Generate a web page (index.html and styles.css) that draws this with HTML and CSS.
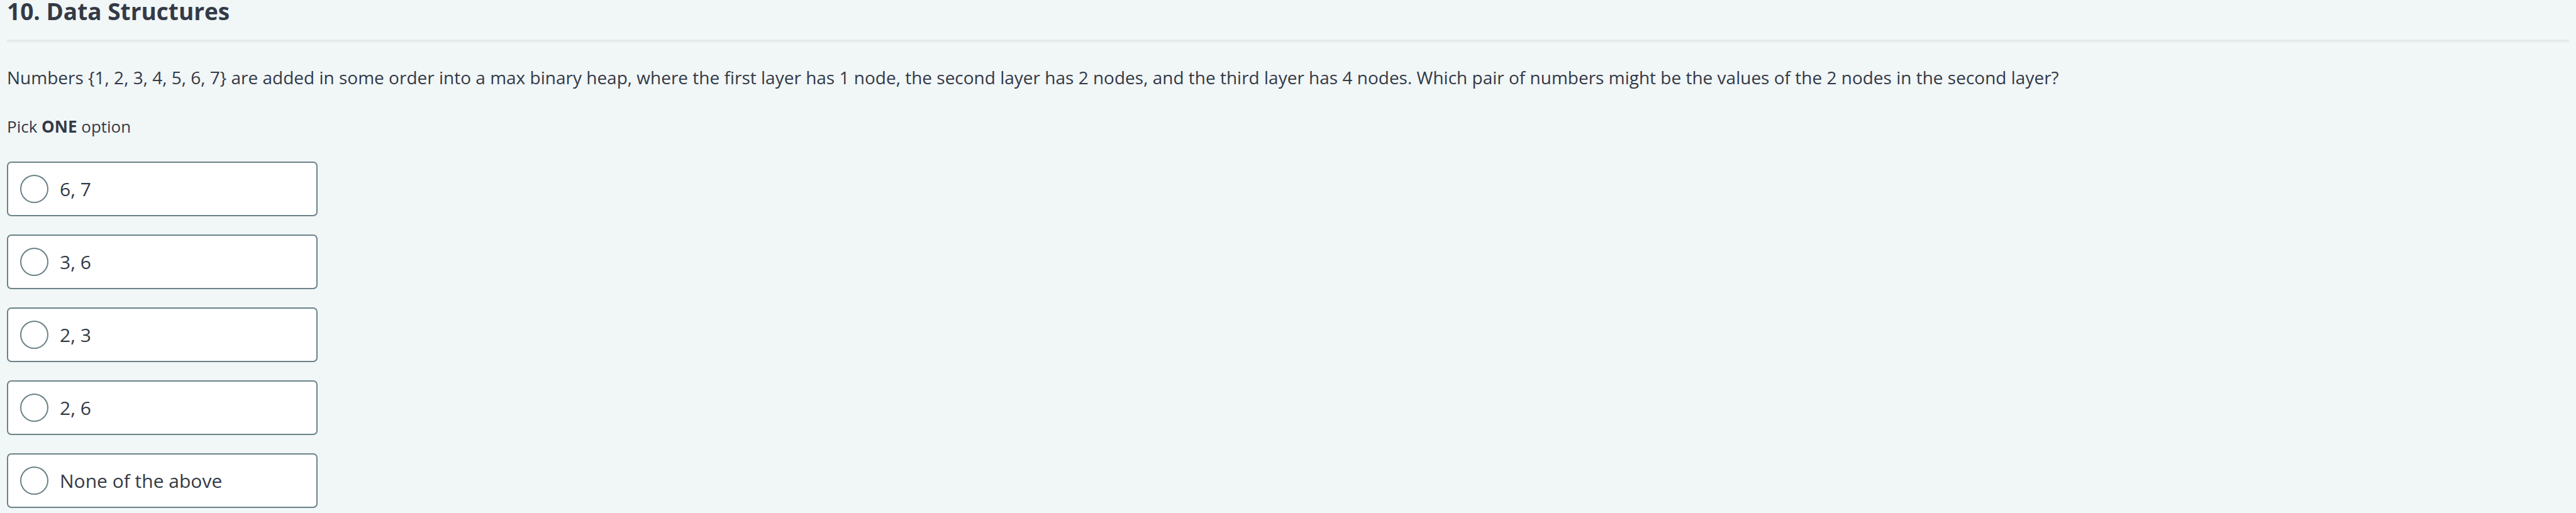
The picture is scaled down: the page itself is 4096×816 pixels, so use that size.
FILE: index.html
```html
<!DOCTYPE html>
<html lang="en">
<head>
<meta charset="utf-8">
<title>Data Structures</title>
<link rel="stylesheet" href="styles.css">
</head>
<body>
<main class="question">
<h1 class="title">10. Data Structures</h1>
<p class="prompt">Numbers {1, 2, 3, 4, 5, 6, 7} are added in some order into a max binary heap, where the first layer has 1 node, the second layer has 2 nodes, and the third layer has 4 nodes. Which pair of numbers might be the values of the 2 nodes in the second layer?</p>
<fieldset class="options">
<legend class="hint">Pick <strong>ONE</strong> option</legend>
<label class="option"><input class="radio" type="radio" name="answer"><span>6, 7</span></label>
<label class="option"><input class="radio" type="radio" name="answer"><span>3, 6</span></label>
<label class="option"><input class="radio" type="radio" name="answer"><span>2, 3</span></label>
<label class="option"><input class="radio" type="radio" name="answer"><span>2, 6</span></label>
<label class="option"><input class="radio" type="radio" name="answer"><span>None of the above</span></label>
</fieldset>
</main>
</body>
</html>
```
FILE: styles.css
```css
* { box-sizing: border-box; }
body { margin: 0; min-height: 100vh; background: #f1f6f7; color: #333a46; font-family: "Open Sans", sans-serif; }
.question { padding: 0 11px 6px; }
.title { margin: 0; padding-bottom: 27px; border-bottom: 4px solid #e5eaec; font-size: 37px; line-height: 36px; font-weight: 700; }
.prompt { margin: 34px 0 0; font-size: 28px; line-height: 44px; }
.options { margin: 34px 0 0; padding: 0; border: 0; min-width: 0; display: flex; flex-direction: column; align-items: flex-start; gap: 29px; }
.hint { padding: 0; margin-bottom: 34px; font-size: 26px; line-height: 44px; }
.option { display: flex; align-items: center; gap: 18px; width: 494px; min-height: 87px; padding: 0 19px; background: #fff; border: 2px solid #6b8288; border-radius: 7px; font-size: 30px; line-height: 44px; }
.radio { appearance: none; flex: none; width: 45px; height: 45px; margin: 0; border: 2px solid #6b8288; border-radius: 50%; background: #fff; }
.radio:checked { border-width: 14px; }
```
